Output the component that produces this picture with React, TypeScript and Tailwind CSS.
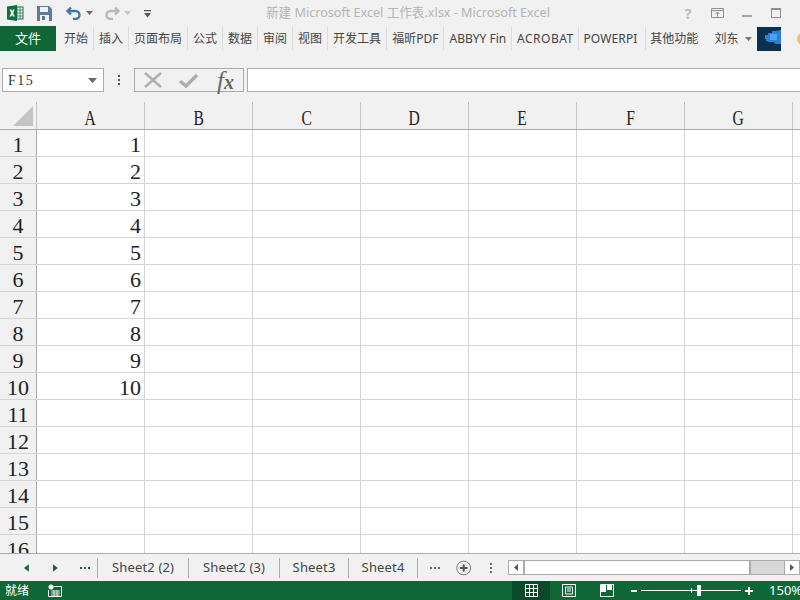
const ribbonTabs = [
  { label: '开始', cls: 'pl-[6px] pr-[5px] border-r border-[#dcdcdc]' },
  { label: '插入', cls: 'px-[5px] border-r border-[#dcdcdc]' },
  { label: '页面布局', cls: 'px-[5px] border-r border-[#dcdcdc]' },
  { label: '公式', cls: 'px-[5px] border-r border-[#dcdcdc]' },
  { label: '数据', cls: 'px-[5px] border-r border-[#dcdcdc]' },
  { label: '审阅', cls: 'px-[5px] border-r border-[#dcdcdc]' },
  { label: '视图', cls: 'px-[5px] border-r border-[#dcdcdc]' },
  { label: '开发工具', cls: 'px-[5px] border-r border-[#dcdcdc]' },
  { label: '福昕PDF', cls: 'px-[5px] border-r border-[#dcdcdc]' },
  { label: 'ABBYY Fin', cls: 'w-[68px] justify-center border-r border-[#dcdcdc]' },
  { label: 'ACROBAT', cls: 'w-[67px] justify-center border-r border-[#dcdcdc] tracking-[0.5px]' },
  { label: 'POWERPI', cls: 'w-[67px] pl-[4px] border-r border-[#dcdcdc] tracking-[0.15px]' },
  { label: '其他功能', cls: 'w-[56px] justify-center' },
]
const columns = ['A', 'B', 'C', 'D', 'E', 'F', 'G']
const rows = Array.from({ length: 16 }, (_, i) => i + 1)
const sheets = [
  { label: 'Sheet2 (2)', cls: 'w-[91px]' },
  { label: 'Sheet2 (3)', cls: 'w-[91px]' },
  { label: 'Sheet3', cls: 'w-[69px]' },
  { label: 'Sheet4', cls: 'w-[69px]' },
]

function Caret({ color = '#6a6a6a' }: { color?: string }) {
  return (
    <svg width="7" height="4" viewBox="0 0 7 4">
      <path d="M0 0h7L3.5 4z" fill={color} />
    </svg>
  )
}

function TitleBar() {
  return (
    <div className="flex h-[26px] shrink-0 items-center">
      <svg className="ml-[7px] shrink-0" width="17" height="16" viewBox="0 0 17 16">
        <rect x="7" y="2" width="9" height="12" fill="#fff" stroke="#1d6f42" />
        <path d="M10 2v12M13 2v12M7 5h9M7 8h9M7 11h9" stroke="#1d6f42" strokeWidth="0.8" />
        <path d="M0 1.5 10 0v16L0 14.5z" fill="#107041" />
        <path d="M2.6 4.5h1.8L5.2 6.5 6 4.5h1.7L6.1 8l1.7 3.5H6L5.1 9.4 4.2 11.5H2.5L4.2 8z" fill="#fff" />
      </svg>
      <svg className="ml-[13px] shrink-0" width="15" height="15" viewBox="0 0 15 15">
        <path d="M0 0h12l3 3v12H0z" fill="#5d7a99" />
        <rect x="3" y="1" width="8" height="5" fill="#f1f1f1" />
        <rect x="3" y="9" width="9" height="6" fill="#f1f1f1" />
        <rect x="5" y="10" width="3" height="4" fill="#5d7a99" />
      </svg>
      <svg className="ml-[14px] shrink-0" width="16" height="14" viewBox="0 0 16 14">
        <path d="M5 1.500 1.500 5 5 8.500M2 5h7.500a4 4 0 0 1 0 8H7" fill="none" stroke="#3f78ad" strokeWidth="2.400" />
      </svg>
      <span className="ml-[4px]"><Caret /></span>
      <svg className="ml-[11px] shrink-0" width="16" height="14" viewBox="0 0 16 14">
        <path d="M11 1.500 14.500 5 11 8.500M14 5H6.500a4 4 0 0 0 0 8H9" fill="none" stroke="#b8b8b8" strokeWidth="2.400" />
      </svg>
      <span className="ml-[4px]"><Caret color="#c4c4c4" /></span>
      <svg className="ml-[13px] mt-[2px] shrink-0" width="7" height="8" viewBox="0 0 7 8">
        <path d="M0 0h7v1.200H0zM0 3h7L3.500 7.500z" fill="#555" />
      </svg>
      <span className="ml-[115px] whitespace-nowrap text-[12.6px] text-[#b4b4b4]">新建 Microsoft Excel 工作表.xlsx - Microsoft Excel</span>
      <span className="ml-auto w-[14px] text-center text-[14px] font-bold text-[#b9b9b9]">?</span>
      <svg className="ml-[16px] shrink-0" width="13" height="10" viewBox="0 0 13 10">
        <path d="M.5.5h12v9H.5zM1 2.500h11M6.500 8.500V4.500M4.500 6l2-2 2 2" fill="none" stroke="#8f8f8f" />
      </svg>
      <div className="ml-[18px] mt-[5px] h-[2px] w-[10px] bg-[#a5a5a5]" />
      <div className="ml-[19px] mr-[19px] h-[10px] w-[10px] border border-t-2 border-[#8f8f8f]" />
    </div>
  )
}

function RibbonTabs() {
  return (
    <div className="flex h-[25px] shrink-0 items-center text-[12px] text-[#444]">
      <div className="flex h-full w-[56px] shrink-0 items-center justify-center bg-[#0f6637] text-[13px] text-white">文件</div>
      <div className="flex h-full shrink-0 items-center pl-[2px]">
        {ribbonTabs.map((tab) => (
          <span key={tab.label} className={`flex h-[23px] shrink-0 items-center whitespace-nowrap ${tab.cls}`}>
            {tab.label}
          </span>
        ))}
      </div>
      <span className="ml-[12px] shrink-0 whitespace-nowrap">刘东</span>
      <span className="ml-[7px] shrink-0"><Caret color="#777" /></span>
      <div className="ml-[5px] h-[24px] w-[24px] shrink-0 bg-[#0b2f4e]">
        <svg width="24" height="24" viewBox="0 0 24 24">
          <path d="M8 8h3V6h4V4h4l5-1v14h-5l-3-2h-4l-2-1H9v-2H8z" fill="#2f7fd1" />
          <path d="M13 7h7v6h-7z" fill="#4aa3ef" />
        </svg>
      </div>
      <div className="ml-[16px] h-[12px] w-[12px] shrink-0 rounded-full bg-[#eec06d]" />
    </div>
  )
}

function FormulaBar() {
  return (
    <div className="mt-[17px] flex h-[24px] shrink-0 items-stretch">
      <div className="ml-[2px] flex w-[102px] items-center justify-between border border-[#ababab] bg-white pl-[5px] pr-[6px] font-['Liberation_Serif',serif] text-[14px] tracking-[1.5px] text-[#333]">
        F15
        <svg width="9" height="5" viewBox="0 0 9 5"><path d="M0 0h9L4.500 5z" fill="#666" /></svg>
      </div>
      <div className="flex w-[30px] flex-col items-center justify-center gap-[2px]">
        <i className="h-[2px] w-[2px] bg-[#555]" />
        <i className="h-[2px] w-[2px] bg-[#555]" />
        <i className="h-[2px] w-[2px] bg-[#555]" />
      </div>
      <div className="flex w-[110px] items-center border border-[#ababab] bg-[#f1f1f1]">
        <svg className="ml-[9px]" width="18" height="16" viewBox="0 0 18 16"><path d="M1 1l16 14M17 1 1 15" stroke="#aeaeae" strokeWidth="2.400" /></svg>
        <svg className="ml-[17px]" width="19" height="15" viewBox="0 0 19 15"><path d="M1 8l6 5L18 2" fill="none" stroke="#aeaeae" strokeWidth="3.500" /></svg>
        <span className="ml-[19px] flex items-baseline font-['Liberation_Serif',serif] text-[25px] italic leading-none text-[#666]">
          f<span className="text-[20px] font-bold">x</span>
        </span>
      </div>
      <div className="ml-[3px] flex-1 border-y border-l border-[#ababab] bg-white" />
    </div>
  )
}

function Sheet() {
  return (
    <div className="mt-[10px] h-[452px] shrink-0 overflow-hidden border-b border-[#ababab] bg-white font-['Liberation_Serif',serif] text-[#222]">
      <div className="flex h-[28px] border-b border-[#ababab] bg-[#f1f1f1]">
        <div className="flex w-[37px] shrink-0 items-end justify-end border-r border-[#c6c6c6] pb-[3px] pr-[3px]">
          <svg width="20" height="20" viewBox="0 0 20 20"><path d="M20 0v20H0z" fill="#c4c4c4" /></svg>
        </div>
        {columns.map((c) => (
          <div key={c} className="flex w-[108px] shrink-0 items-center justify-center border-r border-[#c6c6c6] pt-[5px] text-[20px]">
            <span className="inline-block scale-x-[0.78]">{c}</span>
          </div>
        ))}
        <div className="flex-1" />
      </div>
      {rows.map((r) => (
        <div key={r} className="flex h-[27px] border-b border-[#d4d4d4] text-[22px]">
          <div className="flex w-[37px] shrink-0 items-center justify-center border-r border-[#ababab] bg-[#f1f1f1] pt-[3px]">{r}</div>
          <div className="flex w-[108px] shrink-0 items-center justify-end border-r border-[#d4d4d4] pr-[3px] pt-[3px]">{r <= 10 ? r : ''}</div>
          {columns.slice(1).map((c) => (
            <div key={c} className="w-[108px] shrink-0 border-r border-[#d4d4d4]" />
          ))}
        </div>
      ))}
    </div>
  )
}

function SheetTabs() {
  return (
    <div className="flex h-[27px] shrink-0 items-center bg-[#f1f1f1] text-[12px] text-[#444]">
      <svg className="ml-[24px]" width="5" height="8" viewBox="0 0 5 8"><path d="M5 0v8L0 4z" fill="#0f6637" /></svg>
      <svg className="ml-[24px]" width="5" height="8" viewBox="0 0 5 8"><path d="M0 0v8l5-4z" fill="#0f6637" /></svg>
      <span className="ml-[22px] flex w-[14px] gap-[2px]"><i className="h-[2px] w-[2px] bg-[#0f6637]" /><i className="h-[2px] w-[2px] bg-[#0f6637]" /><i className="h-[2px] w-[2px] bg-[#0f6637]" /></span>
      <div className="ml-[4px] h-[20px] border-l border-[#ababab]" />
      {sheets.map((s) => (
        <span key={s.label} className={`flex h-[20px] shrink-0 items-center justify-center whitespace-nowrap border-r border-[#ababab] font-['Noto_Sans',sans-serif] text-[13px] tracking-[0.15px] ${s.cls}`}>{s.label}</span>
      ))}
      <span className="ml-[12px] flex w-[11px] gap-[2px]"><i className="h-[2px] w-[2px] bg-[#666]" /><i className="h-[2px] w-[2px] bg-[#666]" /><i className="h-[2px] w-[2px] bg-[#666]" /></span>
      <svg className="ml-[15px]" width="16" height="16" viewBox="0 0 16 16"><circle cx="8" cy="8" r="7.200" fill="none" stroke="#777" /><path d="M8 4v8M4 8h8" stroke="#555" strokeWidth="2" /></svg>
      <div className="ml-[19px] flex flex-col gap-[2px]"><i className="h-[2px] w-[2px] bg-[#666]" /><i className="h-[2px] w-[2px] bg-[#666]" /><i className="h-[2px] w-[2px] bg-[#666]" /></div>
      <div className="ml-[16px] flex h-[15px] w-[292px] shrink-0 items-stretch border border-[#ababab] bg-[#d8d8d8]">
        <div className="flex w-[14px] items-center justify-center bg-white"><svg width="4" height="7" viewBox="0 0 4 7"><path d="M4 0v7L0 3.500z" fill="#555" /></svg></div>
        <div className="w-[228px] border-x-2 border-[#ababab] bg-white" />
        <div className="flex-1" />
        <div className="flex w-[15px] items-center justify-center border-l border-[#ababab] bg-white"><svg width="4" height="7" viewBox="0 0 4 7"><path d="M0 0v7l4-3.500z" fill="#555" /></svg></div>
      </div>
    </div>
  )
}

function StatusBar() {
  return (
    <div className="flex h-[19px] shrink-0 items-center overflow-hidden bg-[#0f6637] text-[12px] text-white">
      <span className="ml-[5px] shrink-0 whitespace-nowrap">就绪</span>
      <svg className="ml-[19px] shrink-0" width="14" height="13" viewBox="0 0 14 13">
        <circle cx="3" cy="3" r="2.500" fill="#fff" />
        <path d="M5.500 2.500h8v10H.5V6" fill="none" stroke="#fff" />
        <path d="M3 7h9M3 9h9M3 11h9M6 6v6M9 6v6" stroke="#fff" strokeWidth="0.800" />
      </svg>
      <div className="ml-[450px] flex h-full w-[38px] shrink-0 items-center justify-center bg-[#0a4a2a]">
        <svg width="13" height="13" viewBox="0 0 13 13"><path d="M.5.5h12v12H.5zM4.500.5v12M8.500.5v12M.5 4.500h12M.5 8.500h12" fill="none" stroke="#fff" /></svg>
      </div>
      <svg className="ml-[12px] shrink-0" width="14" height="13" viewBox="0 0 14 13"><path d="M.5.5h13v12H.5z" fill="none" stroke="#fff" /><path d="M3.500 3h7v7h-7zM5 5h4M5 7h4" fill="none" stroke="#fff" /></svg>
      <svg className="ml-[24px] shrink-0" width="14" height="13" viewBox="0 0 14 13"><path d="M.5.5h13v12H.5z" fill="none" stroke="#fff" /><path d="M1 1h5v7H1zM7 1h5v5H7z" fill="#fff" /></svg>
      <div className="ml-[17px] h-[2px] w-[6px] shrink-0 bg-white" />
      <div className="relative ml-[4px] h-[1px] w-[100px] shrink-0 bg-white">
        <i className="absolute left-[50px] top-[-2px] h-[5px] w-[1px] bg-white" />
        <i className="absolute left-[56px] top-[-5px] h-[11px] w-[4px] bg-white" />
      </div>
      <svg className="ml-[4px] shrink-0" width="8" height="8" viewBox="0 0 8 8"><path d="M4 0v8M0 4h8" stroke="#fff" strokeWidth="2" /></svg>
      <span className="ml-[16px] shrink-0 whitespace-nowrap font-['Noto_Sans',sans-serif] text-[13px]">150%</span>
    </div>
  )
}

export default function App() {
  return (
    <div className="flex h-[600px] w-[800px] flex-col overflow-hidden bg-[#f1f1f1] font-['Noto_Sans','Noto_Sans_CJK_SC',sans-serif]">
      <TitleBar />
      <RibbonTabs />
      <FormulaBar />
      <Sheet />
      <SheetTabs />
      <StatusBar />
    </div>
  )
}
